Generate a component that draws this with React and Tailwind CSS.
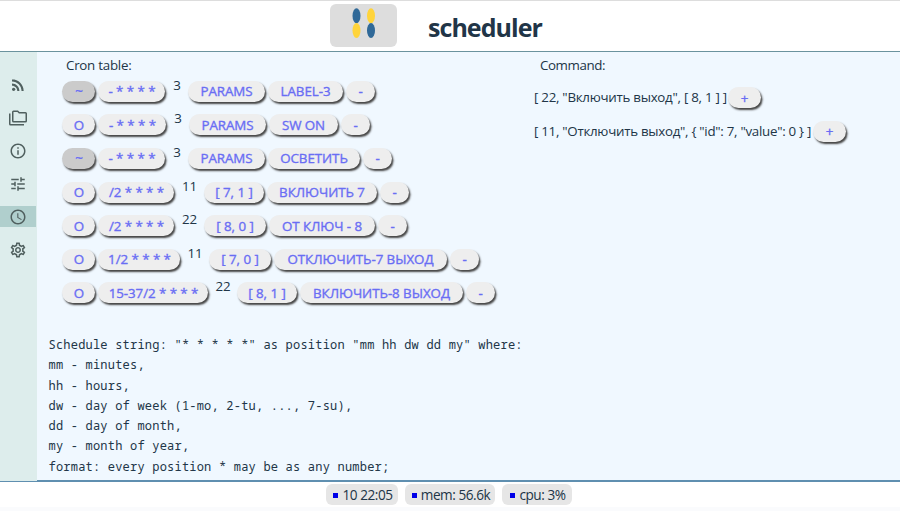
import { MdRssFeed, MdInfoOutline, MdTune, MdAccessTime, MdOutlineSettings } from 'react-icons/md';

const FolderIcon = () => (
  <svg viewBox="0 0 24 24" width="18" height="18" fill="none" stroke="currentColor" strokeWidth="2">
    <path d="M6 3h5.6l2 2H22a1 1 0 0 1 1 1v10a1 1 0 0 1-1 1H6a1 1 0 0 1-1-1V4a1 1 0 0 1 1-1z" />
    <path d="M1 6v14a1 1 0 0 0 1 1h18" />
  </svg>
);

const nav = [
  { key: 'feed', icon: <MdRssFeed size={18} /> },
  { key: 'files', icon: <FolderIcon /> },
  { key: 'info', icon: <MdInfoOutline size={18} /> },
  { key: 'tune', icon: <MdTune size={18} /> },
  { key: 'cron', icon: <MdAccessTime size={18} />, active: true },
  { key: 'settings', icon: <MdOutlineSettings size={18} /> },
];

const rows = [
  { on: '~', cron: '- * * * *', cw: 'w-[67px]', id: '3', iw: 'w-[23px]', args: 'PARAMS', aw: 'w-[77px]', name: 'LABEL-3', nw: 'w-[75px]' },
  { on: 'O', cron: '- * * * *', cw: 'w-[68px]', id: '3', iw: 'w-[23px]', args: 'PARAMS', aw: 'w-[77px]', name: 'SW ON', nw: 'w-[69px]' },
  { on: '~', cron: '- * * * *', cw: 'w-[67px]', id: '3', iw: 'w-[23px]', args: 'PARAMS', aw: 'w-[77px]', name: 'ОСВЕТИТЬ', nw: 'w-[92px]' },
  { on: 'O', cron: '/2 * * * *', cw: 'w-[76px]', id: '11', iw: 'w-[30px]', args: '[ 7, 1 ]', aw: 'w-[60px]', name: 'ВКЛЮЧИТЬ 7', nw: 'w-[110px]' },
  { on: 'O', cron: '/2 * * * *', cw: 'w-[76px]', id: '22', iw: 'w-[30px]', args: '[ 8, 0 ]', aw: 'w-[62px]', name: 'ОТ КЛЮЧ - 8', nw: 'w-[106px]' },
  { on: 'O', cron: '1/2 * * * *', cw: 'w-[82px]', id: '11', iw: 'w-[29px]', args: '[ 7, 0 ]', aw: 'w-[62px]', name: 'ОТКЛЮЧИТЬ-7 ВЫХОД', nw: 'w-[173px]' },
  { on: 'O', cron: '15-37/2 * * * *', cw: 'w-[110px]', id: '22', iw: 'w-[29px]', args: '[ 8, 1 ]', aw: 'w-[60px]', name: 'ВКЛЮЧИТЬ-8 ВЫХОД', nw: 'w-[163px]' },
];

function Pill({ children, className = '', muted = false }) {
  return (
    <button
      className={`flex h-[21px] shrink-0 items-center justify-center whitespace-nowrap rounded-[11px] text-[13.33px] leading-[20px] tracking-[-0.05px] text-[#696df4] shadow-[1.5px_2px_2px_#444] [-webkit-text-stroke:0.35px_#696df4] ${muted ? 'bg-[#cbcbcb]' : 'bg-[#eeeeee]'} ${className}`}
    >
      {children}
    </button>
  );
}

function CronRow({ row }) {
  return (
    <div className="flex h-[33.6px] items-start">
      <Pill muted={row.on === '~'} className="mr-[3px] w-[33px] pl-px">{row.on}</Pill>
      <Pill className={`pl-px ${row.cw}`}>{row.cron}</Pill>
      <span className={`-mt-[5px] shrink-0 pl-px text-center text-[13.33px] leading-[18px] ${row.iw}`}>{row.id}</span>
      <Pill className={row.aw}>{row.args}</Pill>
      <Pill className={`mx-[3px] ${row.nw}`}>{row.name}</Pill>
      <Pill className="w-[29px]">-</Pill>
    </div>
  );
}

function Stat({ children, className }) {
  return (
    <div className={`flex h-[21px] items-center justify-center gap-[4px] whitespace-nowrap rounded-[6px] bg-[#e6e6e6] pl-[2px] pt-[2px] text-[13.6px] tracking-[-0.45px] ${className}`}>
      <span className="h-[5px] w-[5px] bg-[#0000e8]" />
      {children}
    </div>
  );
}

const help = `Schedule string: "* * * * *" as position "mm hh dw dd my" where:
mm - minutes,
hh - hours,
dw - day of week (1-mo, 2-tu, ..., 7-su),
dd - day of month,
my - month of year,
format: every position * may be as any number;`;

export default function App() {
  return (
    <div className="flex h-[511px] w-[900px] flex-col overflow-hidden bg-[#fafbfd] font-['Open_Sans','Noto_Sans',sans-serif] text-[#213547]">
      <header className="flex h-[52px] shrink-0 border-b border-t border-b-[#6b939e] border-t-[#dddddd] bg-white">
        <div className="ml-[330px] mt-[3px] flex h-[43px] w-[67px] justify-center rounded-[6px] bg-[#dddddd]">
          <svg width="24" height="36" viewBox="0 0 24 36">
            <ellipse cx="4.5" cy="11.7" rx="4" ry="7.5" fill="#306998" />
            <ellipse cx="19" cy="11.7" rx="4" ry="7.5" fill="#ffd43b" />
            <ellipse cx="4.5" cy="26.5" rx="4" ry="7.5" fill="#ffd43b" />
            <ellipse cx="19" cy="26.5" rx="4" ry="7.5" fill="#306998" />
          </svg>
        </div>
        <h1 className="ml-[31px] mt-[8px] text-[25px] font-bold leading-[36px] tracking-[-0.95px]">scheduler</h1>
      </header>
      <div className="flex h-[430px] shrink-0">
        <nav className="flex w-[37px] shrink-0 flex-col gap-[12px] border-b border-[#5f8fb0] bg-[#ddedec] pt-[22px] text-[#50605f]">
          {nav.map((n) => (
            <a key={n.key} className={`flex h-[21px] w-[36px] shrink-0 items-center justify-center ${n.active ? 'bg-[#b0cfcd]' : ''}`}>
              {n.icon}
            </a>
          ))}
        </nav>
        <main className="flex grow flex-col border-b-2 border-[#5f8fb0] bg-[#f0f8ff]">
          <div className="flex h-[283px] shrink-0">
            <section className="w-[497px] pl-[25px]">
              <h2 className="ml-[4px] h-[28.8px] pt-[3px] text-[13.33px] leading-[20px] tracking-[-0.25px]">Cron table:</h2>
              {rows.map((r, i) => <CronRow key={i} row={r} />)}
            </section>
            <section className="text-[13.33px] leading-[20px]">
              <h2 className="ml-[6px] h-[35px] pt-[3px] tracking-[-0.4px]">Command:</h2>
              <div className="flex h-[33.5px] items-start tracking-[-0.27px]">
                <span className="w-[194px] whitespace-nowrap">[ 22, "Включить выход", [ 8, 1 ] ]</span>
                <Pill className="w-[33px]">+</Pill>
              </div>
              <div className="flex h-[33.5px] items-start tracking-[-0.28px]">
                <span className="w-[279px] whitespace-nowrap">[ 11, "Отключить выход", {'{ "id": 7, "value": 0 }'} ]</span>
                <Pill className="w-[33px]">+</Pill>
              </div>
            </section>
          </div>
          <pre className="ml-[11.5px] font-['Noto_Sans_Mono','DejaVu_Sans_Mono',monospace] text-[12px] leading-[20.3px] tracking-[0.21px]">{help}</pre>
        </main>
      </div>
      <footer className="flex h-[25px] shrink-0 gap-[7px] bg-white pl-[326px] pt-[2px]">
        <Stat className="w-[72px]">10 22:05</Stat>
        <Stat className="w-[90px]">mem: 56.6k</Stat>
        <Stat className="w-[70px]">cpu: 3%</Stat>
      </footer>
    </div>
  );
}
